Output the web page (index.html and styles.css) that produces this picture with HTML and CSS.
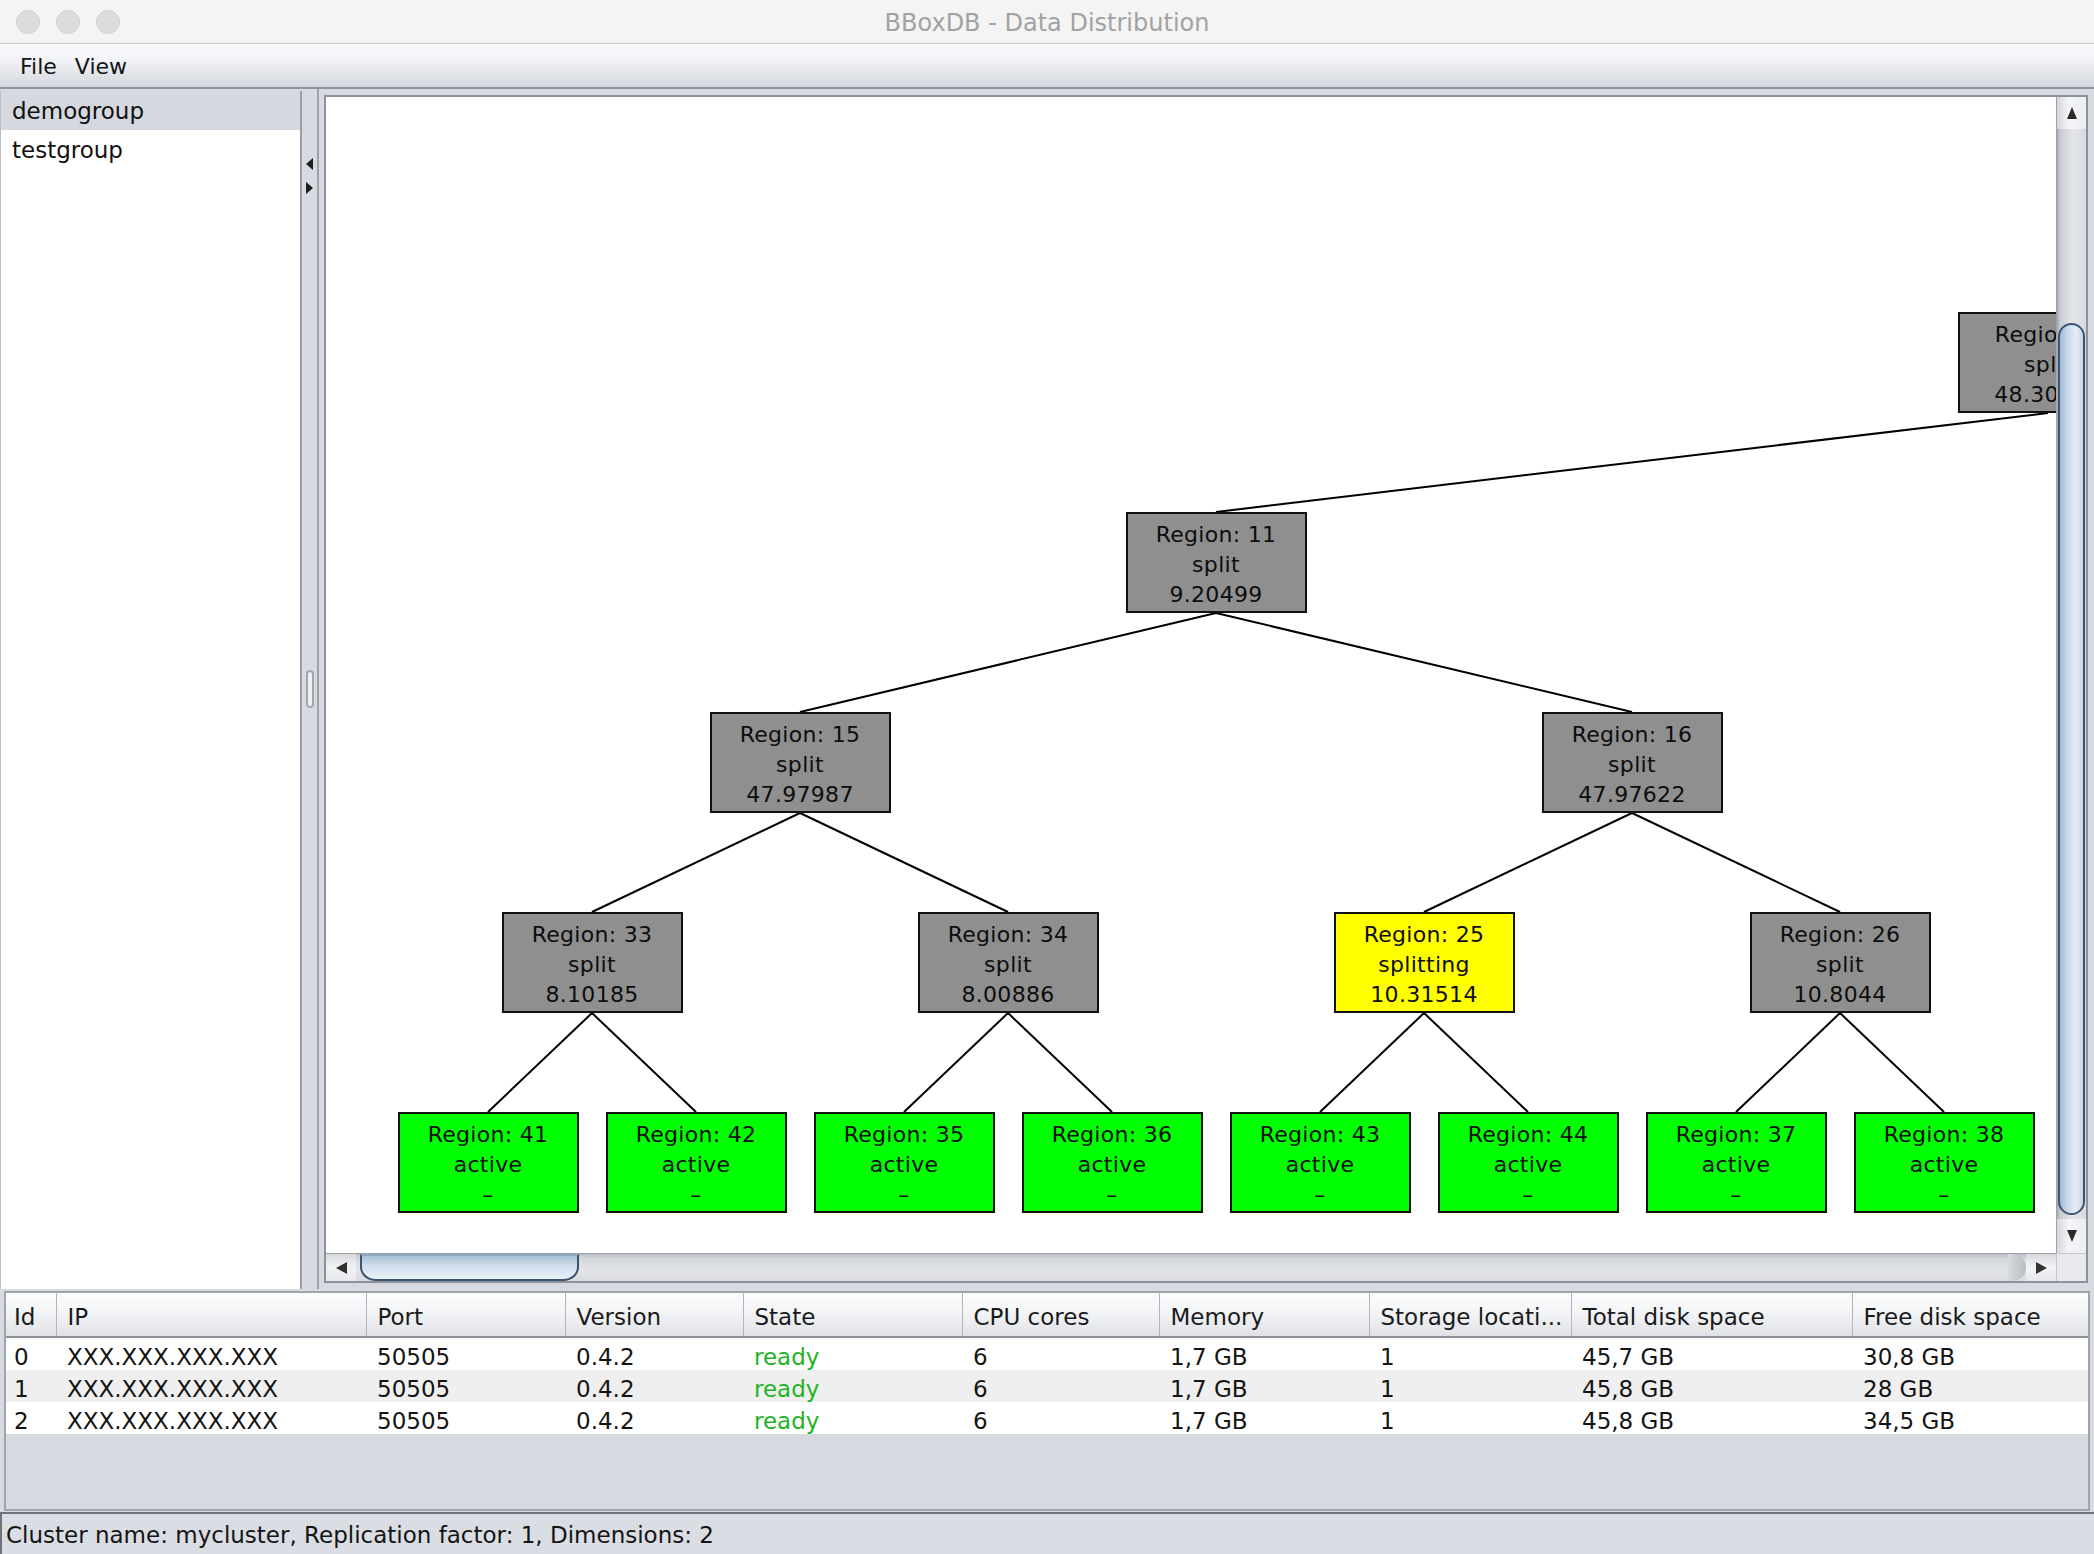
FILE: index.html
```html
<!DOCTYPE html>
<html>
<head>
<meta charset="utf-8">
<title>BBoxDB - Data Distribution</title>
<link rel="stylesheet" href="styles.css">
</head>
<body>
<div class="window">
  <div class="titlebar">
    <div class="lights"><span class="light"></span><span class="light"></span><span class="light"></span></div>
    <div class="title">BBoxDB - Data Distribution</div>
    <div></div>
  </div>
  <div class="menubar"><span class="menu">File</span><span class="menu">View</span></div>
  <div class="main">
    <div class="grouplist">
      <div class="group selected">demogroup</div>
      <div class="group">testgroup</div>
    </div>
    <div class="splitter">
      <div class="split-arrows"><span class="tri-left"></span><span class="tri-right"></span></div>
      <div class="grip"></div>
    </div>
    <div class="graphpane">
      <div class="scrollframe">
        <div class="viewport">
          <svg class="tree" width="1730" height="1156" viewBox="0 0 1730 1156">
            <g class="edges">
              <line x1="1722" y1="316" x2="890" y2="415"/>
              <line x1="890" y1="516" x2="474" y2="615"/>
              <line x1="890" y1="516" x2="1306" y2="615"/>
              <line x1="474" y1="716" x2="266" y2="815"/>
              <line x1="474" y1="716" x2="682" y2="815"/>
              <line x1="1306" y1="716" x2="1098" y2="815"/>
              <line x1="1306" y1="716" x2="1514" y2="815"/>
              <line x1="266" y1="916" x2="162" y2="1015"/>
              <line x1="266" y1="916" x2="370" y2="1015"/>
              <line x1="682" y1="916" x2="578" y2="1015"/>
              <line x1="682" y1="916" x2="786" y2="1015"/>
              <line x1="1098" y1="916" x2="994" y2="1015"/>
              <line x1="1098" y1="916" x2="1202" y2="1015"/>
              <line x1="1514" y1="916" x2="1410" y2="1015"/>
              <line x1="1514" y1="916" x2="1618" y2="1015"/>
            </g>
            <g class="node split"><rect x="1633" y="216" width="179" height="99"/><text x="1722" y="245">Region: 0</text><text x="1722" y="275">split</text><text x="1722" y="305">48.30512</text></g>
            <g class="node split"><rect x="801" y="416" width="179" height="99"/><text x="890" y="445">Region: 11</text><text x="890" y="475">split</text><text x="890" y="505">9.20499</text></g>
            <g class="node split"><rect x="385" y="616" width="179" height="99"/><text x="474" y="645">Region: 15</text><text x="474" y="675">split</text><text x="474" y="705">47.97987</text></g>
            <g class="node split"><rect x="1217" y="616" width="179" height="99"/><text x="1306" y="645">Region: 16</text><text x="1306" y="675">split</text><text x="1306" y="705">47.97622</text></g>
            <g class="node split"><rect x="177" y="816" width="179" height="99"/><text x="266" y="845">Region: 33</text><text x="266" y="875">split</text><text x="266" y="905">8.10185</text></g>
            <g class="node split"><rect x="593" y="816" width="179" height="99"/><text x="682" y="845">Region: 34</text><text x="682" y="875">split</text><text x="682" y="905">8.00886</text></g>
            <g class="node splitting"><rect x="1009" y="816" width="179" height="99"/><text x="1098" y="845">Region: 25</text><text x="1098" y="875">splitting</text><text x="1098" y="905">10.31514</text></g>
            <g class="node split"><rect x="1425" y="816" width="179" height="99"/><text x="1514" y="845">Region: 26</text><text x="1514" y="875">split</text><text x="1514" y="905">10.8044</text></g>
            <g class="node active"><rect x="73" y="1016" width="179" height="99"/><text x="162" y="1045">Region: 41</text><text x="162" y="1075">active</text><text x="162" y="1105">–</text></g>
            <g class="node active"><rect x="281" y="1016" width="179" height="99"/><text x="370" y="1045">Region: 42</text><text x="370" y="1075">active</text><text x="370" y="1105">–</text></g>
            <g class="node active"><rect x="489" y="1016" width="179" height="99"/><text x="578" y="1045">Region: 35</text><text x="578" y="1075">active</text><text x="578" y="1105">–</text></g>
            <g class="node active"><rect x="697" y="1016" width="179" height="99"/><text x="786" y="1045">Region: 36</text><text x="786" y="1075">active</text><text x="786" y="1105">–</text></g>
            <g class="node active"><rect x="905" y="1016" width="179" height="99"/><text x="994" y="1045">Region: 43</text><text x="994" y="1075">active</text><text x="994" y="1105">–</text></g>
            <g class="node active"><rect x="1113" y="1016" width="179" height="99"/><text x="1202" y="1045">Region: 44</text><text x="1202" y="1075">active</text><text x="1202" y="1105">–</text></g>
            <g class="node active"><rect x="1321" y="1016" width="179" height="99"/><text x="1410" y="1045">Region: 37</text><text x="1410" y="1075">active</text><text x="1410" y="1105">–</text></g>
            <g class="node active"><rect x="1529" y="1016" width="179" height="99"/><text x="1618" y="1045">Region: 38</text><text x="1618" y="1075">active</text><text x="1618" y="1105">–</text></g>
          </svg>
        </div>
        <div class="vscroll">
          <div class="vbtn"><span class="tri-up"></span></div>
          <div class="vtrack"><div class="vthumb"></div></div>
          <div class="vbtn vbtn-down"><span class="tri-down"></span></div>
        </div>
        <div class="hscroll">
          <div class="hbtn"><span class="tri-left-s"></span></div>
          <div class="htrack"><div class="hthumb"></div><div class="hcap"></div></div>
          <div class="hbtn"><span class="tri-right-s"></span></div>
        </div>
        <div class="corner"></div>
      </div>
    </div>
  </div>
  <div class="tablesec">
    <div class="tableframe">
      <table class="nodes">
        <colgroup>
          <col class="c-id"><col class="c-ip"><col class="c-port"><col class="c-ver"><col class="c-state"><col class="c-cpu"><col class="c-mem"><col class="c-stor"><col class="c-total"><col class="c-free">
        </colgroup>
        <thead>
          <tr><th class="first">Id</th><th>IP</th><th>Port</th><th>Version</th><th>State</th><th>CPU cores</th><th>Memory</th><th>Storage locati...</th><th>Total disk space</th><th class="last">Free disk space</th></tr>
        </thead>
        <tbody>
          <tr><td class="first">0</td><td>XXX.XXX.XXX.XXX</td><td>50505</td><td>0.4.2</td><td class="ready">ready</td><td>6</td><td>1,7 GB</td><td>1</td><td>45,7 GB</td><td>30,8 GB</td></tr>
          <tr class="alt"><td class="first">1</td><td>XXX.XXX.XXX.XXX</td><td>50505</td><td>0.4.2</td><td class="ready">ready</td><td>6</td><td>1,7 GB</td><td>1</td><td>45,8 GB</td><td>28 GB</td></tr>
          <tr><td class="first">2</td><td>XXX.XXX.XXX.XXX</td><td>50505</td><td>0.4.2</td><td class="ready">ready</td><td>6</td><td>1,7 GB</td><td>1</td><td>45,8 GB</td><td>34,5 GB</td></tr>
        </tbody>
      </table>
    </div>
  </div>
  <div class="statusbar">Cluster name: mycluster, Replication factor: 1, Dimensions: 2</div>
</div>
</body>
</html>
```

FILE: styles.css
```css
* { box-sizing: border-box; }
html, body { margin: 0; padding: 0; }
body {
  width: 2094px;
  height: 1554px;
  overflow: hidden;
  background: #d7dae1;
  font-family: "DejaVu Sans", "Liberation Sans", sans-serif;
  color: #161616;
}
.window {
  display: flex;
  flex-direction: column;
  width: 2094px;
  height: 1554px;
}

/* title bar */
.titlebar {
  height: 44px;
  flex: none;
  background: #f4f4f4;
  border-bottom: 1px solid #c9c9c9;
  display: grid;
  grid-template-columns: 1fr auto 1fr;
  align-items: center;
}
.lights { display: flex; gap: 16px; padding-left: 16px; }
.light {
  width: 24px; height: 24px; border-radius: 50%;
  background: #dcdcdc;
  border: 1px solid #d2d2d2;
}
.title { font-size: 24px; color: #a2a2a2; padding-top: 3px; }

/* menu bar */
.menubar {
  height: 45px;
  flex: none;
  background: linear-gradient(#fafafd 0%, #f5f6f9 30%, #d4d7df 100%);
  border-bottom: 2px solid #8f939b;
  display: flex;
  align-items: center;
  gap: 18px;
  padding-left: 20px;
  padding-top: 2px;
  font-size: 22px;
  color: #141414;
}

/* main split area */
.main {
  height: 1200px;
  flex: none;
  display: flex;
  background: #d7dae1;
}
.grouplist {
  width: 302px;
  flex: none;
  margin-top: 2px;
  background: #fff;
  border-left: 1px solid #b9bcc3;
  border-right: 2px solid #9a9ea6;
  font-size: 23px;
}
.group {
  height: 39px;
  line-height: 39px;
  padding-left: 11px;
  padding-top: 1px;
  color: #111;
}
.group.selected { background: #d5d8df; }

.splitter {
  width: 17px;
  flex: none;
  border-right: 2px solid #9ea2a9;
  display: grid;
  justify-items: center;
}
.split-arrows, .grip { grid-area: 1 / 1; }
.split-arrows {
  align-self: start;
  margin-top: 69px;
  display: flex;
  flex-direction: column;
  gap: 12px;
  align-items: center;
}
.tri-left {
  width: 0; height: 0;
  border-top: 6px solid transparent;
  border-bottom: 6px solid transparent;
  border-right: 7px solid #1e1e1e;
}
.tri-right {
  width: 0; height: 0;
  border-top: 6px solid transparent;
  border-bottom: 6px solid transparent;
  border-left: 7px solid #1e1e1e;
}
.grip {
  align-self: center;
  width: 8px;
  height: 38px;
  border: 2px solid #a3a6ad;
  border-radius: 4px;
  background: #eceef1;
}

.graphpane {
  flex: 1;
  padding: 6px 6px 6px 5px;
}
.scrollframe {
  width: 100%;
  height: 100%;
  border: 2px solid #8d9199;
  display: grid;
  grid-template-columns: 1fr 30px;
  grid-template-rows: 1fr 28px;
}
.viewport {
  background: #fff;
  overflow: hidden;
}
.tree { display: block; font-family: "DejaVu Sans", "Liberation Sans", sans-serif; }
.edges line { stroke: #000; stroke-width: 2; }
.node rect { stroke: #111; stroke-width: 2; }
.node.split rect { fill: #8f8f8f; }
.node.splitting rect { fill: #ffff00; }
.node.active rect { fill: #00ff00; }
.node text {
  font-size: 22px;
  letter-spacing: 0.3px;
  fill: #0d0d0d;
  text-anchor: middle;
}

/* vertical scrollbar */
.vscroll {
  display: flex;
  flex-direction: column;
  background: linear-gradient(to right, #a3a7ae 0, #c9ccd2 3px, #e4e6ea 55%, #d7d9de 100%);
  border-left: 1px solid #9da1a8;
}
.vbtn {
  height: 32px;
  flex: none;
  display: flex;
  align-items: center;
  justify-content: center;
  background: linear-gradient(to right, #d5d7dc, #f4f5f7 40%, #eceef1);
}
.vbtn-down { height: 34px; }
.vtrack { flex: 1; padding-top: 194px; padding-bottom: 4px; }
.vthumb {
  height: 892px;
  margin-left: 1px;
  margin-right: 1px;
  border: 2px solid #3b5470;
  border-radius: 14px;
  background: linear-gradient(to right, #9fb9d2 0%, #c6d8e9 30%, #e4edf6 70%, #c3d5e6 100%);
}
.tri-up {
  width: 0; height: 0;
  border-left: 5px solid transparent;
  border-right: 5px solid transparent;
  border-bottom: 12px solid #2b2b2b;
}
.tri-down {
  width: 0; height: 0;
  border-left: 5px solid transparent;
  border-right: 5px solid transparent;
  border-top: 12px solid #2b2b2b;
}

/* horizontal scrollbar */
.hscroll {
  display: flex;
  background: linear-gradient(#b9bdc4 0, #d2d5da 4px, #e3e5e9 60%, #d9dbdf 100%);
  border-top: 1px solid #9da1a8;
}
.hbtn {
  width: 30px;
  flex: none;
  display: flex;
  align-items: center;
  justify-content: center;
  background: linear-gradient(#d8dade, #f2f3f5 50%, #e6e8eb);
}
.htrack { flex: 1; display: flex; padding-left: 4px; }
.hthumb {
  width: 219px;
  border: 2px solid #3b5470;
  border-top-color: #8fa7c0;
  border-radius: 0 0 16px 16px / 0 0 14px 14px;
  background: linear-gradient(#a9c1d8 0%, #cddcea 40%, #eaf2f9 100%);
}
.hcap {
  margin-left: auto;
  width: 18px;
  border-radius: 0 14px 14px 0;
  background: linear-gradient(to right, #d9dbdf, #b7bbc2);
}
.tri-left-s {
  width: 0; height: 0;
  border-top: 6px solid transparent;
  border-bottom: 6px solid transparent;
  border-right: 11px solid #333;
}
.tri-right-s {
  width: 0; height: 0;
  border-top: 6px solid transparent;
  border-bottom: 6px solid transparent;
  border-left: 11px solid #333;
}
.corner { background: #e9eaed; border-left: 1px solid #c3c6cc; border-top: 1px solid #c3c6cc; }

/* table */
.tablesec {
  height: 223px;
  flex: none;
  padding: 2px 4px 1px 4px;
}
.tableframe {
  height: 100%;
  border: 2px solid #a0a4ab;
  background: #d6d9e0;
  overflow: hidden;
}
.nodes {
  table-layout: fixed;
  border-collapse: collapse;
  width: 2082px;
  font-size: 23px;
}
.c-id { width: 50px; }
.c-ip { width: 310px; }
.c-port { width: 199px; }
.c-ver { width: 178px; }
.c-state { width: 219px; }
.c-cpu { width: 197px; }
.c-mem { width: 210px; }
.c-stor { width: 202px; }
.c-total { width: 281px; }
.c-free { width: 236px; }
.nodes th {
  height: 44px;
  padding: 4px 0 0 11px;
  text-align: left;
  font-weight: normal;
  color: #1a1a1a;
  background: linear-gradient(#fdfdfe 0%, #f3f4f6 45%, #dfe1e6 100%);
  border-right: 1px solid #b2b5bc;
  border-bottom: 2px solid #8e9299;
  white-space: nowrap;
  overflow: hidden;
}
.nodes th.last { border-right: 1px solid #a0a4ab; }
.nodes td {
  height: 32px;
  line-height: 26px;
  padding: 6px 0 0 11px;
  white-space: nowrap;
  overflow: hidden;
  background: #fff;
  color: #141414;
}
.nodes tr.alt td { background: #efefef; }
.nodes .first { padding-left: 8px; }
.nodes td.ready { color: #1fb31f; }

/* status bar */
.statusbar {
  height: 42px;
  flex: none;
  border-top: 2px solid #6f7278;
  border-left: 2px solid #6f7278;
  background: #dadde3;
  font-size: 23px;
  line-height: 42px;
  padding-left: 4px;
  color: #141414;
}
```
